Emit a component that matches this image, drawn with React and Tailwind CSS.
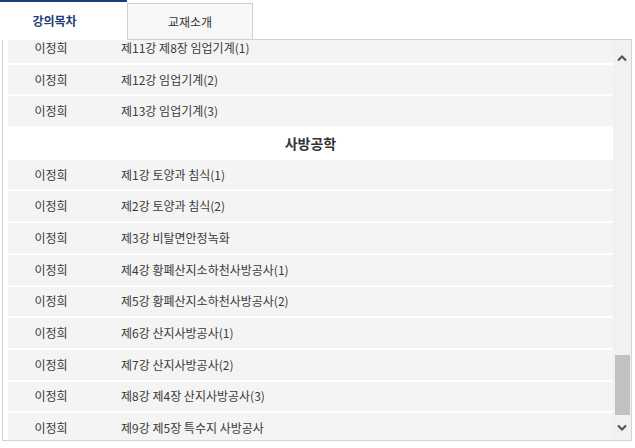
import React from "react";

const rowsA = [
  "제11강 제8장 임업기계(1)",
  "제12강 임업기계(2)",
  "제13강 임업기계(3)",
];
const rowsB = [
  "제1강 토양과 침식(1)",
  "제2강 토양과 침식(2)",
  "제3강 비탈면안정녹화",
  "제4강 황폐산지소하천사방공사(1)",
  "제5강 황폐산지소하천사방공사(2)",
  "제6강 산지사방공사(1)",
  "제7강 산지사방공사(2)",
  "제8강 제4장 산지사방공사(3)",
  "제9강 제5장 특수지 사방공사",
];

function Row({ title }) {
  return (
    <div className="flex items-center h-[29.7px] bg-[#f4f4f4] border-b-2 border-white text-[12px] text-[#3a3a3a] box-content">
      <div className="w-[86px] text-center">이정희</div>
      <div className="pl-[27px]">{title}</div>
    </div>
  );
}

export default function App() {
  return (
    <div
      className="w-[635px] h-[448px] bg-white overflow-hidden"
      style={{ fontFamily: '"Noto Sans CJK KR", "Noto Sans", sans-serif' }}
    >
      <div className="flex h-[40px]">
        <div className="w-[127px] border-t-2 border-[#1b3d7a] bg-white flex items-center justify-center text-[12px] font-bold text-[#1b3d7a] pr-[18px]">
          강의목차
        </div>
        <div className="w-[126px] mt-[3px] border border-[#d0d0d0] bg-[#f7f7f7] flex items-center justify-center text-[12px] text-[#333]">
          교재소개
        </div>
        <div className="flex-1 border-b border-[#d0d0d0] mr-[3px]"></div>
      </div>
      <div className="flex h-[401px] ml-[2px] mr-[3px] border-l border-b border-r border-[#d4d4d4]">
        <div className="flex-1 overflow-hidden pl-[5px]">
          <div className="-mt-[7px]">
            {rowsA.map((t) => (
              <Row key={t} title={t} />
            ))}
            <div className="h-[31.7px] bg-white flex items-center justify-center text-[14px] font-bold text-[#333]">
              사방공학
            </div>
            {rowsB.map((t) => (
              <Row key={t} title={t} />
            ))}
          </div>
        </div>
        <div className="w-[18px] bg-[#f1f1f1] flex flex-col items-center">
          <div className="h-[36px] flex items-center justify-center">
            <svg width="10" height="7" viewBox="0 0 10 7">
              <path d="M1 5.5 L5 1.5 L9 5.5" fill="none" stroke="#505050" strokeWidth="2" />
            </svg>
          </div>
          <div className="flex-1"></div>
          <div className="w-[15px] h-[60px] bg-[#c1c1c1]"></div>
          <div className="h-[25px] flex items-center justify-center">
            <svg width="10" height="7" viewBox="0 0 10 7">
              <path d="M1 1.5 L5 5.5 L9 1.5" fill="none" stroke="#505050" strokeWidth="2" />
            </svg>
          </div>
        </div>
      </div>
    </div>
  );
}
